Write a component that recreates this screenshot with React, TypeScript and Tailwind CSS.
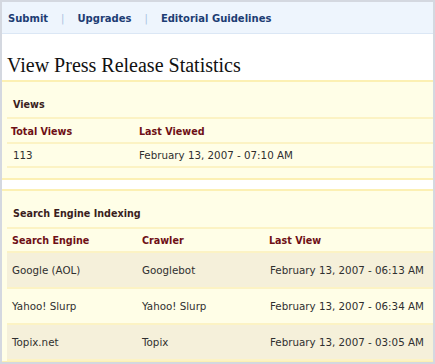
export default function App() {
  const engines = [
    { name: "Google (AOL)", crawler: "Googlebot", last: "February 13, 2007 - 06:13 AM" },
    { name: "Yahoo! Slurp", crawler: "Yahoo! Slurp", last: "February 13, 2007 - 06:34 AM" },
    { name: "Topix.net", crawler: "Topix", last: "February 13, 2007 - 03:05 AM" },
  ];

  return (
    <div className="w-[435px] h-[364px] overflow-hidden bg-white border-2 border-[#d4d8e0] font-['DejaVu_Sans',sans-serif] text-[10.3px] text-[#2f2f2f]">
      {/* top nav */}
      <div className="h-[32px] bg-[#eef5fd] border-b border-[#dbe7f5] flex items-center pl-[6px] pt-[1px] text-[10px] font-bold text-[#1d3d74]">
        <span>Submit</span>
        <span className="mx-[13px] font-normal text-[#a8c2e2]">|</span>
        <span>Upgrades</span>
        <span className="mx-[13px] font-normal text-[#a8c2e2]">|</span>
        <span>Editorial Guidelines</span>
      </div>

      <h1 className="h-[46px] pt-[19px] pl-[5px] font-['Liberation_Serif',serif] text-[20px] leading-[24px] text-[#111]">
        View Press Release Statistics
      </h1>

      {/* Views */}
      <div className="bg-[#fffee7] border-y-2 border-[#fcf0b3] pl-[5px]">
        <div className="h-[37px] flex items-center pt-[11px] pl-[6px] border-b-2 border-[#fcf3c4] text-[9.6px] font-bold text-[#3a1d1d]">Views</div>
        <div className="h-[25px] flex items-center pt-[4px] border-b-2 border-[#fcf3c4] text-[9.6px] font-bold text-[#6e1016]">
          <div className="w-[132px] pl-[4px]">Total Views</div>
          <div>Last Viewed</div>
        </div>
        <div className="h-[24px] flex items-center pt-[2px] border-b-2 border-[#fcf3c4]">
          <div className="w-[132px] pl-[6px]">113</div>
          <div>February 13, 2007 - 07:10 AM</div>
        </div>
        <div className="h-[10px]" />
      </div>

      <div className="h-[9px]" />

      {/* Search engine indexing */}
      <div className="bg-[#fffee7] border-y-2 border-[#fcf0b3] pl-[5px]">
        <div className="h-[38px] flex items-center pt-[10px] pl-[6px] border-b-2 border-[#fcf3c4] text-[9.6px] font-bold text-[#3a1d1d]">Search Engine Indexing</div>
        <div className="h-[24px] flex items-center pt-[3px] border-b-2 border-[#fcf3c4] text-[9.6px] font-bold text-[#6e1016]">
          <div className="w-[135px] pl-[5px]">Search Engine</div>
          <div className="w-[127px]">Crawler</div>
          <div>Last View</div>
        </div>
        {engines.map((e, i) => (
          <div key={e.name} className={`h-[36px] flex items-center pt-[2px] border-b-2 border-[#fcf3c4] ${i % 2 === 0 ? "bg-[#f5f0da]" : "bg-[#fffee7]"}`}>
            <div className="w-[135px] pl-[5px]">{e.name}</div>
            <div className="w-[128px]">{e.crawler}</div>
            <div>{e.last}</div>
          </div>
        ))}
      </div>
    </div>
  );
}
